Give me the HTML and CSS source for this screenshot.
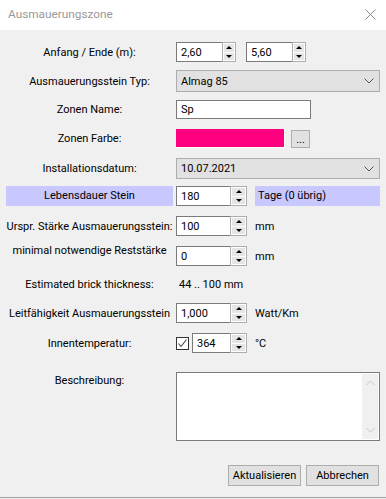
FILE: index.html
```html
<!DOCTYPE html>
<html lang="de">
<head>
<meta charset="utf-8">
<title>Ausmauerungszone</title>
<link rel="stylesheet" href="styles.css">
</head>
<body>
<div class="window">
  <div class="titlebar">
    <span class="title">Ausmauerungszone</span>
    <svg class="close" width="11" height="11" viewBox="0 0 11 11"><path d="M0.5 0.5 L10.5 10.5 M10.5 0.5 L0.5 10.5" stroke="#8a8a8a" stroke-width="1" fill="none"/></svg>
  </div>
  <div class="body">
    <div class="row r1">
      <div class="label">Anfang / Ende (m):</div>
      <div class="ctrl gap10">
        <div class="spin w60"><div class="val">2,60</div><div class="btns narrow"><span class="up"></span><span class="down"></span></div></div>
        <div class="spin w60"><div class="val">5,60</div><div class="btns narrow"><span class="up"></span><span class="down"></span></div></div>
      </div>
    </div>
    <div class="row r2">
      <div class="label">Ausmauerungsstein Typ:</div>
      <div class="ctrl"><div class="combo">Almag 85<svg class="chev" width="10" height="6" viewBox="0 0 10 6"><path d="M0.5 0.5 L5 5 L9.5 0.5" stroke="#555" fill="none"/></svg></div></div>
    </div>
    <div class="row r3">
      <div class="label">Zonen Name:</div>
      <div class="ctrl"><div class="text w135">Sp</div></div>
    </div>
    <div class="row r4">
      <div class="label">Zonen Farbe:</div>
      <div class="ctrl gap6"><div class="swatch"></div><div class="dots">...</div></div>
    </div>
    <div class="row r5">
      <div class="label">Installationsdatum:</div>
      <div class="ctrl"><div class="combo">10.07.2021<svg class="chev" width="10" height="6" viewBox="0 0 10 6"><path d="M0.5 0.5 L5 5 L9.5 0.5" stroke="#555" fill="none"/></svg></div></div>
    </div>
    <div class="row r6">
      <div class="label band">Lebensdauer Stein</div>
      <div class="ctrl gap8">
        <div class="spin w71"><div class="val">180</div><div class="btns"><span class="up"></span><span class="down"></span></div></div>
        <div class="tage">Tage (0 übrig)</div>
      </div>
    </div>
    <div class="row r7">
      <div class="label">Urspr. Stärke Ausmauerungsstein:</div>
      <div class="ctrl gap8">
        <div class="spin w71"><div class="val">100</div><div class="btns"><span class="up"></span><span class="down"></span></div></div>
        <span class="unit">mm</span>
      </div>
    </div>
    <div class="row r8">
      <div class="label up-label">minimal notwendige Reststärke</div>
      <div class="ctrl gap8">
        <div class="spin w71"><div class="val">0</div><div class="btns"><span class="up"></span><span class="down"></span></div></div>
        <span class="unit">mm</span>
      </div>
    </div>
    <div class="row r9">
      <div class="label">Estimated brick thickness:</div>
      <div class="ctrl"><span class="estim">44 .. 100 mm</span></div>
    </div>
    <div class="row r10">
      <div class="label">Leitfähigkeit Ausmauerungsstein</div>
      <div class="ctrl gap8">
        <div class="spin w71"><div class="val">1,000</div><div class="btns"><span class="up"></span><span class="down"></span></div></div>
        <span class="unit">Watt/Km</span>
      </div>
    </div>
    <div class="row r11">
      <div class="label">Innentemperatur:</div>
      <div class="ctrl">
        <div class="check"><svg width="11" height="11" viewBox="0 0 11 11"><path d="M1.5 5.5 L4 8.5 L9.5 1.5" stroke="#444" stroke-width="1.1" fill="none"/></svg></div>
        <div class="spin w55"><div class="val">364</div><div class="btns"><span class="up"></span><span class="down"></span></div></div>
        <span class="unit degree">°C</span>
      </div>
    </div>
    <div class="row r12">
      <div class="label top-label">Beschreibung:</div>
      <div class="ctrl">
        <div class="memo">
          <div class="scroll">
            <svg width="9" height="6" viewBox="0 0 9 6"><path d="M0.5 5 L4.5 1 L8.5 5" stroke="#c2c2c2" fill="none"/></svg>
            <svg width="9" height="6" viewBox="0 0 9 6"><path d="M0.5 1 L4.5 5 L8.5 1" stroke="#c2c2c2" fill="none"/></svg>
          </div>
        </div>
      </div>
    </div>
    <div class="buttons">
      <div class="btn">Aktualisieren</div>
      <div class="btn">Abbrechen</div>
    </div>
  </div>
  <div class="bottom-edge"></div>
</div>
</body>
</html>
```
FILE: styles.css
```css
html, body {
  margin: 0;
  padding: 0;
}
body {
  width: 386px;
  height: 499px;
  overflow: hidden;
  background: #f0f0f0;
  font-family: Roboto, "Liberation Sans", sans-serif;
  font-size: 11px;
  color: #000;
}
.window {
  display: flex;
  flex-direction: column;
  height: 499px;
}
.titlebar {
  height: 30px;
  background: #fff;
  display: flex;
  align-items: center;
  justify-content: space-between;
  padding: 0 10px 0 8px;
}
.title {
  font-size: 11.8px;
  color: #999;
  margin-top: -2px;
}
.close {
  margin-top: -2px;
}
.body {
  padding: 0 6px;
  flex: 1;
}
.row {
  display: grid;
  grid-template-columns: 167px 204px;
  column-gap: 3px;
  align-items: center;
  height: 20px;
  margin-top: 10px;
}
.r1 { margin-top: 12px; }
.r2 { margin-top: 8px; height: 22px; }
.r3 { margin-top: 8px; height: 19px; }
.r4 { margin-top: 10px; height: 19px; }
.r5 { margin-top: 10px; height: 21px; }
.r6 { margin-top: 7px; }
.r9 { height: 16px; }
.r10 { margin-top: 11px; }
.r12 { margin-top: 19px; height: 69px; align-items: start; }
.label {
  text-align: center;
  white-space: nowrap;
  line-height: 15px;
}
.band {
  background: #c8c8ff;
  height: 20px;
  line-height: 20px;
}
.up-label {
  align-self: start;
  margin-top: -3px;
}
.top-label {
  padding-top: 1px;
}
.ctrl {
  display: flex;
  align-items: center;
  height: 100%;
}
.gap10 { gap: 10px; }
.gap8 { gap: 8px; }
.gap6 { gap: 6px; }
.spin {
  display: flex;
  height: 20px;
}
.w60 { width: 60px; }
.w71 { width: 71px; }
.w55 { width: 55px; margin-left: 3px; }
.val {
  flex: 1;
  background: #fff;
  border: 1px solid #7a7a7a;
  border-right: none;
  padding-left: 4px;
  display: flex;
  align-items: center;
  box-sizing: border-box;
}
.btns {
  width: 17px;
  box-sizing: border-box;
  border: 1px solid #adadad;
  background: #fff;
  padding: 1px;
  display: flex;
  flex-direction: column;
  gap: 1px;
}
.btns.narrow {
  width: 14px;
}
.btns span {
  flex: 1;
  background: #e5e5e5;
  display: flex;
  align-items: center;
  justify-content: center;
}
.up::before {
  content: "";
  border-left: 3px solid transparent;
  border-right: 3px solid transparent;
  border-bottom: 3px solid #000;
}
.down::before {
  content: "";
  border-left: 3px solid transparent;
  border-right: 3px solid transparent;
  border-top: 3px solid #000;
}
.combo {
  width: 204px;
  height: 100%;
  box-sizing: border-box;
  background: #e1e1e1;
  border: 1px solid #adadad;
  padding: 0 5px 0 4px;
  display: flex;
  align-items: center;
  justify-content: space-between;
}
.text {
  height: 100%;
  box-sizing: border-box;
  background: #fff;
  border: 1px solid #7a7a7a;
  padding-left: 4px;
  display: flex;
  align-items: center;
}
.w135 { width: 135px; }
.swatch {
  width: 109px;
  height: 19px;
  box-sizing: border-box;
  background: #ff0080;
  border-right: 1px solid #fff;
  border-bottom: 1px solid #fff;
}
.dots {
  width: 19px;
  height: 18px;
  box-sizing: border-box;
  background: #e1e1e1;
  border: 1px solid #adadad;
  text-align: center;
  line-height: 18px;
  font-size: 11px;
}
.tage {
  flex: 1;
  height: 20px;
  line-height: 20px;
  background: #c8c8ff;
  padding-left: 3px;
}
.unit {
  white-space: nowrap;
}
.degree {
  margin-left: 8px;
}
.estim {
  padding-left: 3px;
}
.check {
  width: 13px;
  height: 13px;
  box-sizing: border-box;
  border: 1px solid #333;
  background: #fff;
  display: flex;
  align-items: center;
  justify-content: center;
}
.memo {
  width: 204px;
  height: 69px;
  box-sizing: border-box;
  background: #fff;
  border: 1px solid #7a7a7a;
  display: flex;
  justify-content: flex-end;
  padding: 1px;
}
.scroll {
  width: 16px;
  background: #f0f0f0;
  display: flex;
  flex-direction: column;
  justify-content: space-between;
  align-items: center;
  padding: 6px 0 6px;
}
.buttons {
  display: flex;
  justify-content: flex-end;
  gap: 5px;
  margin-top: 24px;
  padding-right: 1px;
}
.btn {
  width: 73px;
  height: 21px;
  box-sizing: border-box;
  background: #e1e1e1;
  border: 1px solid #adadad;
  text-align: center;
  line-height: 19px;
}
.bottom-edge {
  height: 1px;
  background: #a0a0a0;
  margin-bottom: 1px;
}
```
